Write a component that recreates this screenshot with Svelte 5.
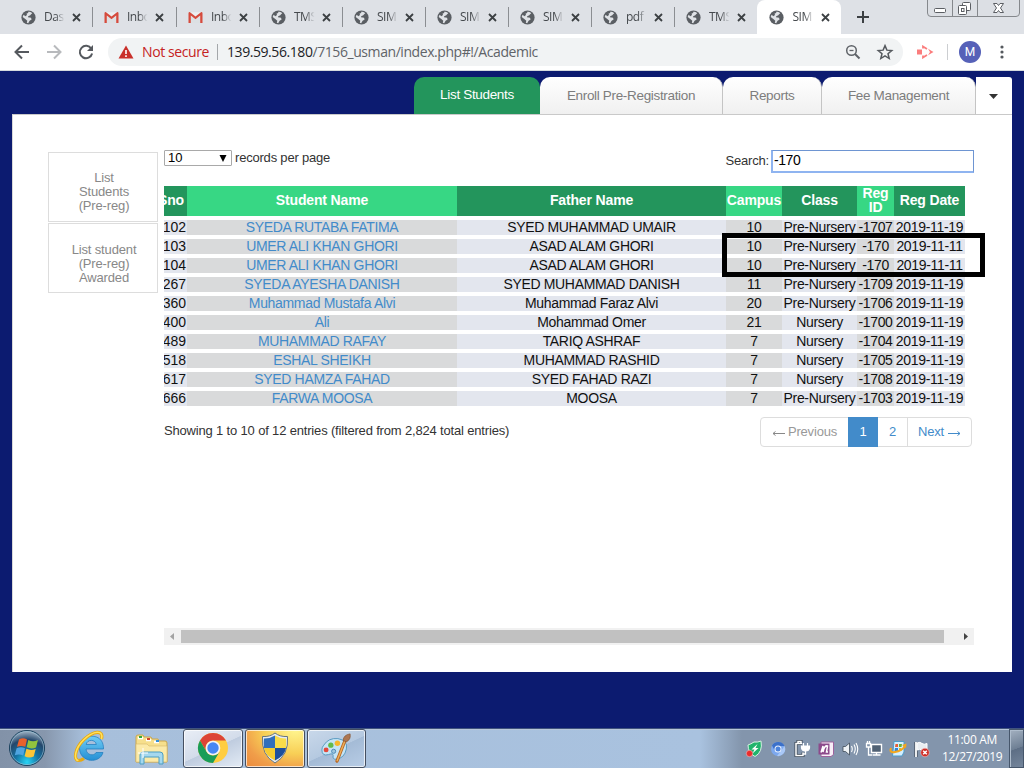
<script>
  const tabs = [
    { icon: 'globe', text: 'Das' },
    { icon: 'mail', text: 'Inbo' },
    { icon: 'mail', text: 'Inbo' },
    { icon: 'globe', text: 'TMS' },
    { icon: 'globe', text: 'SIM' },
    { icon: 'globe', text: 'SIM' },
    { icon: 'globe', text: 'SIM' },
    { icon: 'globe', text: 'pdf' },
    { icon: 'globe', text: 'TMS' },
    { icon: 'globe', text: 'SIM', active: true }
  ];
  const heads = ['Sno', 'Student Name', 'Father Name', 'Campus', 'Class', 'Reg ID', 'Reg Date'];
  const rows = [
    ['102', 'SYEDA RUTABA FATIMA', 'SYED MUHAMMAD UMAIR', '10', 'Pre-Nursery', '-1707', '2019-11-19'],
    ['103', 'UMER ALI KHAN GHORI', 'ASAD ALAM GHORI', '10', 'Pre-Nursery', '-170', '2019-11-11'],
    ['104', 'UMER ALI KHAN GHORI', 'ASAD ALAM GHORI', '10', 'Pre-Nursery', '-170', '2019-11-11'],
    ['267', 'SYEDA AYESHA DANISH', 'SYED MUHAMMAD DANISH', '11', 'Pre-Nursery', '-1709', '2019-11-19'],
    ['360', 'Muhammad Mustafa Alvi', 'Muhammad Faraz Alvi', '20', 'Pre-Nursery', '-1706', '2019-11-19'],
    ['400', 'Ali', 'Mohammad Omer', '21', 'Nursery', '-1700', '2019-11-19'],
    ['489', 'MUHAMMAD RAFAY', 'TARIQ ASHRAF', '7', 'Nursery', '-1704', '2019-11-19'],
    ['518', 'ESHAL SHEIKH', 'MUHAMMAD RASHID', '7', 'Nursery', '-1705', '2019-11-19'],
    ['617', 'SYED HAMZA FAHAD', 'SYED FAHAD RAZI', '7', 'Nursery', '-1708', '2019-11-19'],
    ['666', 'FARWA MOOSA', 'MOOSA', '7', 'Pre-Nursery', '-1703', '2019-11-19']
  ];
</script>

<div class="screen">
  <header class="strip">
    {#each tabs as t}
      <div class="tab" class:active={t.active}>
        {#if t.icon === 'globe'}
          <svg class="fav" viewBox="0 0 15 15"><circle cx="7.5" cy="7.5" r="7.1" fill="#5a5e63"/><path d="M7.2 1.800Q10 1.300 11.300 3.200Q9.800 4 9.300 5.200L7.200 6.200 7 7.200 10 7.700 10.600 9.500 8.600 10.700 7.200 13.200 5.800 12.800 6.300 10.700 4.600 9.200 1.700 7Q2 5.700 2.700 4.700L4.300 6.300 6 5 5.600 3.600 7.200 3Z" fill="#dfe2e6"/></svg>
        {:else}
          <svg class="fav" viewBox="0 0 15 15"><path d="M1 2.300 H14 V13 H1Z" fill="#eceff1"/><path d="M3 13 V6 L7.500 9.500 12 6 V13Z" fill="#dce0e3"/><path d="M.5 13 V3.200 Q.5 2 1.700 2 L7.500 6.600 13.300 2 Q14.500 2 14.500 3.200 V13 H12.200 V5.600 L7.500 9.300 2.800 5.600 V13Z" fill="#d54b3d"/></svg>
        {/if}
        <span class="ttext">{t.text}</span>
        <svg class="x" viewBox="0 0 9 9"><path d="M1 1 L8 8 M8 1 L1 8" stroke="#3c4043" stroke-width="1.8"/></svg>
      </div>
    {/each}
    <svg class="plus" viewBox="0 0 12 12"><path d="M6 0V12M0 6H12" stroke="#3c4043" stroke-width="2"/></svg>
    <svg class="winctl" viewBox="0 0 94 18">
      <path d="M.5 0V13Q.5 16.500 4 16.500H89Q92.500 16.500 92.500 13V0" fill="#dcdfe4" stroke="#85888c"/>
      <path d="M25.500 0V16M50.500 0V16" stroke="#85888c"/>
      <rect x="7.500" y="8.500" width="11" height="4" rx="1" fill="#fff" stroke="#5b5e63"/>
      <rect x="35.500" y="2.500" width="8" height="8" rx="1" fill="#fff" stroke="#5b5e63"/>
      <rect x="31.500" y="5.500" width="8" height="9" rx="1" fill="#fff" stroke="#5b5e63"/>
      <rect x="34.500" y="8.500" width="2.500" height="3" fill="#fff" stroke="#5b5e63"/>
      <path d="M66.500 3.500H70L71.500 5.500 73 3.500H76.500L73.500 8 76.500 12.500H73L71.500 10.500 70 12.500H66.500L69.500 8Z" fill="#fff" stroke="#5b5e63"/>
    </svg>
  </header>

  <div class="toolbar">
    <svg class="nav" viewBox="0 0 18 18"><path d="M16 9H3M9 2.500L2.500 9 9 15.500" fill="none" stroke="#55595e" stroke-width="2"/></svg>
    <svg class="nav" viewBox="0 0 18 18"><path d="M2 9H15M9 2.500L15.500 9 9 15.500" fill="none" stroke="#b8babd" stroke-width="2"/></svg>
    <svg class="nav" viewBox="0 0 18 18"><path d="M14.300 5.700A6.200 6.200 0 1 0 15.100 10.500" fill="none" stroke="#55595e" stroke-width="2"/><path d="M16 2V8H10Z" fill="#55595e"/></svg>
    <div class="omni">
      <svg class="warn" viewBox="0 0 16 14"><path d="M8 .5L15.500 13.500H.5Z" fill="#c9302a"/><path d="M8 5V9M8 10.200V12" stroke="#fff" stroke-width="1.600"/></svg>
      <span class="nots">Not secure</span>
      <i></i>
      <span class="url"><b>139.59.56.180</b>/7156_usman/index.php#!/Academic</span>
      <svg class="mag" viewBox="0 0 16 16"><circle cx="6.500" cy="6.500" r="4.800" fill="none" stroke="#5f6368" stroke-width="1.500"/><path d="M4.500 6.500H8.500" stroke="#5f6368" stroke-width="1.300"/><path d="M10 10L14.500 14.500" stroke="#5f6368" stroke-width="2"/></svg>
      <svg class="star" viewBox="0 0 24 24"><path d="M12 3.500L14.500 9.500 21 10 16 14.300 17.600 20.700 12 17.300 6.400 20.700 8 14.300 3 10 9.500 9.500Z" fill="none" stroke="#55595e" stroke-width="2"/></svg>
    </div>
    <svg class="ext" viewBox="0 0 17 14"><path d="M0 4.500H5V9.500H0Z" fill="#fb7d7d"/><path d="M6 3.500V1.500L10 4M6 10.500V12.500L10 10" fill="none" stroke="#fb7d7d" stroke-width="1.800"/><path d="M11 3.800L16.500 7 11 10.200 13 7Z" fill="#fb7d7d"/></svg>
    <i class="tsep"></i>
    <span class="avatar">M</span>
    <svg class="dots" viewBox="0 0 4 14"><g fill="#55595e"><circle cx="2" cy="2" r="1.600"/><circle cx="2" cy="7" r="1.600"/><circle cx="2" cy="12" r="1.600"/></g></svg>
  </div>

  <main>
    <nav class="mainnav">
      <a class="on">List Students</a>
      <a class="w2">Enroll Pre-Registration</a>
      <a class="w3">Reports</a>
      <a class="w4">Fee Management</a>
      <div class="more"><svg viewBox="0 0 9 5"><path d="M0 0H9L4.500 5Z" fill="#333"/></svg></div>
    </nav>
    <section class="panel">
      <aside>
        <div>List<br>Students<br>(Pre-reg)</div>
        <div>List student<br>(Pre-reg)<br>Awarded</div>
      </aside>
      <div class="content">
        <div class="filters">
          <div class="select"><span>10</span><svg viewBox="0 0 8 7"><path d="M.5 0H7.500L4 7Z" fill="#000"/></svg></div>
          <span class="rpp">records per page</span>
          <span class="slabel">Search:</span>
          <div class="input">-170</div>
        </div>
        <div class="table">
          <div class="row head">
            {#each heads as h}<div><span>{h}</span></div>{/each}
          </div>
          {#each rows as r}
            <div class="row">
              {#each r as c}<div><span>{c}</span></div>{/each}
            </div>
          {/each}
          <div class="mark"></div>
        </div>
        <div class="foot">
          <span class="info">Showing 1 to 10 of 12 entries (filtered from 2,824 total entries)</span>
          <div class="pager"><span class="prev"><svg viewBox="0 0 13 8"><path d="M13 4.500H1M3.500 2.500L1 4.500 3.500 6.500" fill="none" stroke="#888"/></svg>Previous</span><span class="cur">1</span><span class="two">2</span><span class="next">Next<svg viewBox="0 0 13 8"><path d="M0 4.500H12M9.500 2.500L12 4.500 9.500 6.500" fill="none" stroke="#428bca"/></svg></span></div>
        </div>
        <div class="hscroll">
          <svg viewBox="0 0 17 17"><path d="M10 5V12L6 8.500Z" fill="#a3a3a3"/></svg>
          <div class="thumb"></div>
          <svg viewBox="0 0 17 17"><path d="M7 5V12L11 8.500Z" fill="#444"/></svg>
        </div>
      </div>
    </section>
  </main>

  <footer>
    <svg class="orb" viewBox="0 0 40 40">
      <defs><radialGradient id="orbg" cx=".5" cy=".9" r=".85"><stop offset="0" stop-color="#27d4f5"/><stop offset=".4" stop-color="#1473a3"/><stop offset=".75" stop-color="#24476b"/><stop offset="1" stop-color="#8fa5b9"/></radialGradient></defs>
      <circle cx="20" cy="20" r="17.500" fill="url(#orbg)" stroke="#173f5c"/>
      <circle cx="20" cy="20" r="16.600" fill="none" stroke="#9fc4d8" stroke-opacity=".6"/>
      <path d="M12 11.500Q16 9 20 11.500L18.300 18.800Q14 17 10 18.800Z" fill="#e8612c"/>
      <path d="M21.300 12Q26 14.500 31 12L29 19.500Q24.500 21.500 19.700 19.300Z" fill="#91c33e"/>
      <path d="M9.600 20.200Q14 18.200 18 20.200L16.200 27.500Q12 25.500 7.800 27.300Z" fill="#4fa4e0"/>
      <path d="M19.400 20.800Q24 23 28.700 20.900L26.700 28.600Q22 30.500 17.600 28.300Z" fill="#fbc536"/>
    </svg>
    <svg class="ie" viewBox="0 0 34 34">
      <defs><linearGradient id="ieg" x1="0" y1="0" x2="0" y2="1"><stop offset="0" stop-color="#70cdf5"/><stop offset="1" stop-color="#258fd4"/></linearGradient></defs>
      <path d="M30.500 19H13C13.500 26 22 26 23 22.500H30C27 34 7 33 6.500 18.500C6.500 3 31 1 30.500 19ZM13.200 14.500H23.300C22.600 9 14 9 13.200 14.500Z" fill="url(#ieg)" stroke="#1c7abb" stroke-width=".7"/>
      <path d="M28.500 9C31-1 20 1 11 9.500C2 18 0 30 5.500 30.500C7 30.500 9 30 11 28.500" fill="none" stroke="#e7a912" stroke-width="3.200"/><path d="M28.500 9C31-1 20 1 11 9.500C2 18 0 30 5.500 30.500" fill="none" stroke="#ffe05c" stroke-width="1.600"/>
    </svg>
    <svg class="folder" viewBox="0 0 34 32">
      <path d="M2 28V3Q2 1 4 1H9L10 3H17L18 5H24L25 7H31Q33 7 33 9V28Z" fill="#f6df8c" stroke="#c9a64e"/>
      <path d="M4 4H9M12 6H17M20 8H25" stroke="#fff" stroke-width="2.500"/><path d="M5 3H8" stroke="#31a83a" stroke-width="2"/><path d="M13 5H16" stroke="#d5442c" stroke-width="2"/><path d="M22 7H25" stroke="#328fdb" stroke-width="2"/>
      <path d="M2 10H13L15 12H33V28H2Z" fill="#fbeaa8" stroke="#d6b868" stroke-width=".6"/>
      <path d="M6 30V21Q6 18 9 18H26Q29 18 29 21V30H25V23H10V30Z" fill="#a5d8ee" stroke="#4b9ec3"/><path d="M9 14V24M4 19H14" stroke="#fff" stroke-width="1"/>
    </svg>
    <div class="app chromeapp"><svg viewBox="0 0 32 32"><circle cx="16" cy="16" r="15" fill="#ffcd41"/><path d="M3 8.500A15 15 0 0 1 29 8.500H16A7.500 7.500 0 0 0 9.500 19.700Z" fill="#dc4437"/><path d="M3 8.500L9.500 19.700A7.500 7.500 0 0 0 22.500 19.700L16 31A15 15 0 0 1 3 8.500Z" fill="#199d58"/><circle cx="16" cy="16" r="7.300" fill="#f4f4f4"/><circle cx="16" cy="16" r="5.700" fill="#4687f2"/></svg></div>
    <div class="app shieldapp"><svg viewBox="0 0 32 32"><path d="M16 1Q21 5 28.500 4.500Q30 23 16 31Q2 23 3.500 4.500Q11 5 16 1Z" fill="#e8edf1" stroke="#66747e"/><path d="M16 3.500V16H5Q4.500 11 5 6.500Q11 6.700 16 3.500Z" fill="#326fbc"/><path d="M16 3.500V16H27Q27.500 11 27 6.500Q21 6.700 16 3.500Z" fill="#f9dc4a"/><path d="M5 16H16V28.500Q6.500 24 5 16Z" fill="#f4cc31"/><path d="M27 16H16V28.500Q25.500 24 27 16Z" fill="#1c4f9c"/></svg></div>
    <div class="app paintapp"><svg viewBox="0 0 34 32"><path d="M4 13Q9 5 19 6Q30 8 28 17Q26 27 17 28Q13 28 14 24Q14 21 9 23Q2 25 2 18Q2 15 4 13Z" fill="#c5e4f5" stroke="#5598be"/><circle cx="6.500" cy="18" r="2.600" fill="#e34839"/><circle cx="11.500" cy="13" r="2.800" fill="#63ba4a"/><circle cx="18.500" cy="11" r="2.900" fill="#f7b72c"/><circle cx="14.500" cy="19.500" r="2.200" fill="#9cc5dd" stroke="#4a87b5"/><path d="M27 7L18 30" stroke="#b66622" stroke-width="3.400" stroke-linecap="round"/><path d="M27 7L18 30" stroke="#eeb05b" stroke-width="1.500"/><path d="M24.500 8Q25 2 32 1Q33 7 28 9.500Z" fill="#ad7651" stroke="#82522f" stroke-width=".7"/></svg></div>

    <div class="tray">
      <svg viewBox="0 0 18 18"><path d="M9 2Q13 2.500 16 1Q18 12 10 16.500Q3 13 3 5Q6 4 9 2Z" fill="#20b46c" stroke="#d5f3e2"/><path d="M12.500 4L6.500 9.500H9.500L7.500 13.500 13.500 8H10.500Z" fill="#fff"/><circle cx="4.500" cy="13.500" r="3.200" fill="#ec2b2b" stroke="#f6d5d5" stroke-width=".5"/></svg>
      <svg viewBox="0 0 18 18"><circle cx="9" cy="9" r="7" fill="#7ca8ee"/><path d="M3 5.500A7 7 0 0 1 15.500 6H9A3.500 3.500 0 0 0 6 11Z" fill="#3b70c9"/><path d="M15.500 6A7 7 0 0 1 8 16L12 11Z" fill="#a9c8f7"/><circle cx="9" cy="9" r="3.500" fill="#eaf1fd"/><circle cx="9" cy="9" r="2.500" fill="#4b83dc"/></svg>
      <svg viewBox="0 0 18 18"><path d="M9 3.500H3V15.500H10V12.500M5 3V1.500H8V3" fill="none" stroke="#3d4855" stroke-width="3"/><path d="M9 3.500H3V15.500H10V12.500M5 3V1.500H8V3" fill="none" stroke="#fff" stroke-width="1.500"/><path d="M8.500 6H16.500V8Q16 11 12.500 11Q9 11 8.500 8ZM10.500 6V3M14.500 6V3" fill="#fff" stroke="#fff" stroke-width="1.200"/><path d="M12.500 11V14H10" fill="none" stroke="#fff" stroke-width="1.300"/></svg>
      <svg viewBox="0 0 18 18"><path d="M4 2H16.500V14.500L14 16.500H4Z" fill="#f8eef7" stroke="#9d629d"/><path d="M1.500 3.500H12.500V14.500H1.500Z" fill="#8c4a8b"/><path d="M4 12.500L6 6L6 12Q7.500 5 10.500 6L9.500 12H11" fill="none" stroke="#fff" stroke-width="1.500"/></svg>
      <svg viewBox="0 0 18 18"><path d="M2 6.500H4.500L8.500 3V15L4.500 11.500H2Z" fill="#eef2f5" stroke="#3e4a57" stroke-width=".8"/><path d="M10.500 6Q12 9 10.500 12M13 4.500Q15.500 9 13 13.500M15 3Q18.500 9 15 15" fill="none" stroke="#fff" stroke-width="1.100"/></svg>
      <svg viewBox="0 0 18 18"><path d="M6.500 4.500H16.500V12.500H6.500Z" fill="#506174" stroke="#fff" stroke-width="1.400"/><path d="M7.500 15H15.500M11.500 13V15M3.500 7V15H7M1.500 3.500H5.500V7H1.500ZM2.500 1V3.500M4.500 1V3.500" fill="none" stroke="#fff" stroke-width="1.300"/></svg>
      <svg viewBox="0 0 18 18"><path d="M5 1.500H15V12L13 16H3.500Z" fill="#d3efff" stroke="#4d9cca"/><path d="M6.500 4H9V7H6Z" fill="#e65f37"/><path d="M10 4H13L12.500 7H10Z" fill="#65af3b"/><path d="M6 8H9V11H5.500Z" fill="#3484cf"/><path d="M10 8H12.500V11H10Z" fill="#e8af27"/><path d="M2 8Q0 13 6 12Q13 11 16 6" fill="none" stroke="#f3a71d" stroke-width="2"/><path d="M13 5L17.500 3.500 17 8Z" fill="#f3a71d"/></svg>
      <svg viewBox="0 0 18 18"><path d="M3 2V17" stroke="#424c58" stroke-width="3.200"/><path d="M3 2V17" stroke="#fff" stroke-width="1.800"/><path d="M4 3Q7 1.500 9 3.500Q11 5 14 3.500V10Q11 12 9 10Q7 8.500 4 10Z" fill="#e9edf1" stroke="#fff"/><circle cx="12" cy="12.500" r="4.300" fill="#cf2e26" stroke="#f2c5c2" stroke-width=".6"/><path d="M10.200 10.700L13.800 14.300M13.800 10.700L10.200 14.300" stroke="#fff" stroke-width="1.500"/></svg>
    </div>
    <div class="clock"><span>11:00 AM</span><span>12/27/2019</span></div>
    <div class="peek"></div>
  </footer>
</div>

<style>
  :global(body) { overflow: hidden; }
  .screen, .screen * { box-sizing: border-box; }
  .screen { width: 1024px; height: 768px; display: flex; flex-direction: column; background: #0c1b70; font-family: "Liberation Sans", Arial, sans-serif; overflow: hidden; }
  svg { display: block; flex: none; }
  .strip { height: 34px; background: #dee1e6; display: flex; padding-left: 10px; flex: none; }
  .tab { width: 83px; height: 34px; display: flex; align-items: center; padding-left: 10.500px; background: linear-gradient(#8b8e92, #8b8e92) 100% 7px / 1px 20px no-repeat; font: 12px/16px "Open Sans", sans-serif; color: #45494d; flex: none; }
  .tab:nth-child(2) { width: 84px; }
  .tab:nth-child(9) { background: none; width: 82px; }
  .tab.active { background: #fff; border-radius: 8px 8px 0 0; width: 84px; padding-left: 12px; }
  .fav { width: 15px; height: 15px; }
  .ttext { width: 21px; margin-left: 8.500px; overflow: hidden; white-space: nowrap; letter-spacing: -.5px; mask-image: linear-gradient(90deg, #000 55%, transparent 98%); }
  .x { width: 9px; height: 9px; margin-left: 7px; }
  .plus { width: 12px; height: 12px; margin: 11px 0 0 16px; }
  .winctl { width: 94px; height: 18px; margin-left: 58px; }
  .toolbar { height: 37px; background: #fff; border-bottom: 1px solid #d5dade; display: flex; align-items: center; flex: none; padding-left: 13px; }
  .nav { width: 18px; height: 18px; margin-right: 14px; }
  .omni { width: 795px; height: 28px; border-radius: 14px; background: #f1f3f4; display: flex; align-items: center; padding-left: 10px; font: 14px/20px "Open Sans", sans-serif; margin-left: -1px; }
  .warn { width: 16px; height: 14px; }
  .nots { color: #c5221f; width: 67px; margin-left: 8px; white-space: nowrap; letter-spacing: -.4px; }
  .omni i { width: 1px; height: 16px; background: #a4a7aa; margin: 0 9px 0 8px; }
  .url { color: #5f6368; width: 312px; white-space: nowrap; letter-spacing: -.43px; }
  .url b { font-weight: 400; color: #202124; }
  .mag { width: 16px; height: 16px; margin-left: 306px; }
  .star { width: 18px; height: 18px; margin-left: 15px; }
  .ext { width: 17px; height: 14px; margin-left: 14px; }
  .tsep { width: 1px; height: 16px; background: #ccced1; margin-left: 13px; }
  .avatar { width: 22px; height: 22px; border-radius: 50%; background: #5661b8; color: #fff; font: 12px/22px Roboto, sans-serif; text-align: center; margin-left: 11px; }
  .dots { width: 4px; height: 14px; margin-left: 19px; }
  main { height: 657px; flex: none; padding: 6px 12px 0; }
  .mainnav { display: flex; justify-content: flex-end; height: 37px; }
  .mainnav a { height: 37px; border-radius: 10px 10px 0 0; text-align: center; font-size: 13.500px; letter-spacing: -.33px; line-height: 38px; color: #7d7d7d; background: linear-gradient(#fff, #f0f0f0); border-right: 1px solid #c4c4c4; white-space: nowrap; }
  .mainnav .on { width: 126px; background: #23955c; color: #fff; border: 0; line-height: 36px; }
  .w2 { width: 183px; } .w3 { width: 99px; } .w4 { width: 154px; }
  .more { width: 36px; background: #fff; border-radius: 0 3px 0 0; padding: 17px 0 0 13px; }
  .more svg { width: 9px; height: 5px; }
  .panel { height: 558px; background: #fff; border-top: 1px solid #c9c9c9; border-left: 1px solid #d9d9d9; display: flex; padding: 35px 0 0 35px; }
  aside { width: 116px; padding-top: 2px; flex: none; }
  aside div { width: 110px; height: 70px; margin-bottom: 1px; border: 1px solid #ddd; padding: 18px 0 0 2px; text-align: center; color: #888; font-size: 13px; line-height: 14px; letter-spacing: -.15px; }
  aside div + div { padding-top: 19px; }
  .content { width: 810px; }
  .filters { display: flex; height: 36px; font-size: 13px; color: #333; }
  .select { width: 68px; height: 16px; border: 1px solid #a9a9a9; border-radius: 1px; display: flex; align-items: center; color: #000; padding-left: 3px; letter-spacing: -.1px; line-height: 14px; }
  .select svg { width: 8px; height: 7px; margin-left: 37px; }
  .rpp { margin-left: 3px; line-height: 16px; letter-spacing: -.2px; width: 490.500px; }
  .slabel { line-height: 21px; letter-spacing: -.2px; width: 45.500px; }
  .input { width: 203px; height: 23px; border: 1px solid #6e95d2; border-bottom: 2px solid #8fb4f0; border-left: 2px solid #8fb4f0; font-size: 14px; line-height: 19px; color: #000; padding-left: 1px; letter-spacing: -.45px; }
  .table { position: relative; width: 801px; color: #111; font-size: 14px; letter-spacing: -.33px; }
  .row { display: grid; grid-template-columns: 23px 270px 269px 56px 75px 37px 71px; height: 15px; margin-bottom: 4px; line-height: 15px; }
  .row div { background: #e3e6ee; display: flex; justify-content: center; align-items: center; white-space: nowrap; min-width: 0; }
  .row div:nth-child(even) { background: #d9dadb; }
  .row div:first-child { justify-content: flex-end; overflow: hidden; padding-right: 1px; letter-spacing: 0; }
  .row div:nth-child(2) { color: #428bca; }
  .row.head { height: 30px; font-weight: 700; color: #fff; letter-spacing: -.15px; line-height: 14px; }
  .head div { background: #23955c; text-align: center; white-space: normal; padding-bottom: 2px; }
  .row.head div:nth-child(even) { background: #37d784; color: #fff; }
  .row.head div:first-child { padding-right: 3px; letter-spacing: -.15px; }
  .mark { position: absolute; left: 558px; top: 47px; width: 263px; height: 44px; border: 5px solid #000; }
  .foot { display: flex; justify-content: space-between; margin-top: 11px; padding-right: 2px; font-size: 13px; color: #333; letter-spacing: -.17px; }
  .info { line-height: 27px; white-space: nowrap; }
  .pager { display: flex; width: 212px; height: 30px; border: 1px solid #ddd; border-radius: 4px; color: #428bca; line-height: 28px; flex: none; }
  .pager span { display: flex; align-items: center; justify-content: center; }
  .pager svg { width: 13px; height: 8px; margin-top: 2px; }
  .pager .prev { width: 87px; color: #999; gap: 3px; }
  .cur { width: 30px; height: 30px; margin-top: -1px; background: #428bca; color: #fff; }
  .two { width: 30px; border-right: 1px solid #ddd; }
  .next { width: 63px; gap: 4px; }
  .hscroll { margin-top: 181px; height: 17px; background: #f1f1f1; display: flex; align-items: center; width: 810px; }
  .hscroll svg { width: 17px; height: 17px; }
  .thumb { width: 763px; height: 13px; background: #c1c1c1; margin-right: 13px; }
  footer { height: 40px; flex: none; border-top: 1px solid #40537e; box-shadow: inset 0 1px #b7c7da; background: linear-gradient(90deg, #8292a8 0, #8797ad 45px, #a7bfdb 85px, #a9c2df 700px, #8395ac 742px, #8395ac 100%); display: flex; align-items: center; }
  .orb { width: 40px; height: 40px; margin-left: 7px; margin-top: -1px; }
  .ie { width: 34px; height: 34px; margin-left: 26px; margin-top: -3px; }
  .folder { width: 34px; height: 32px; margin-left: 27px; margin-top: 2px; }
  .app { width: 60px; height: 39px; border: 1px solid #454f60; border-radius: 3px; box-shadow: inset 0 0 0 1px #ffffffb0; display: flex; align-items: center; justify-content: center; margin-right: 2px; }
  .app svg { width: 32px; height: 32px; margin-top: -1px; }
  .chromeapp { margin-left: 15px; background: linear-gradient(155deg, #e9eef6, #d3dcea 50%, #bfccdf 51%, #e3ebf5); }
  .shieldapp { background: radial-gradient(ellipse at 85% 0, #fff58f, #f8cf56 45%, #f09d49 75%, #eb8a3d); }
  .paintapp { background: linear-gradient(155deg, #c9d8ea, #b5c9e0 50%, #a4bbd6 51%, #b8cde6); }
  .tray { display: flex; gap: 6px; margin-left: 377px; }
  .tray svg { width: 18px; height: 18px; }
  .clock { width: 74px; display: flex; flex-direction: column; align-items: center; font: 12px/17px "Open Sans", sans-serif; letter-spacing: -.35px; color: #fff; margin-left: 4px; margin-top: -1px; white-space: nowrap; }
  .peek { width: 15px; height: 39px; margin-left: auto; border: 1px solid #46566b; box-shadow: inset 1px 1px #aebccc; background: linear-gradient(160deg, #a3b0c0, #6e7f94 50%, #5d6e85 51%, #74859b); }
</style>
